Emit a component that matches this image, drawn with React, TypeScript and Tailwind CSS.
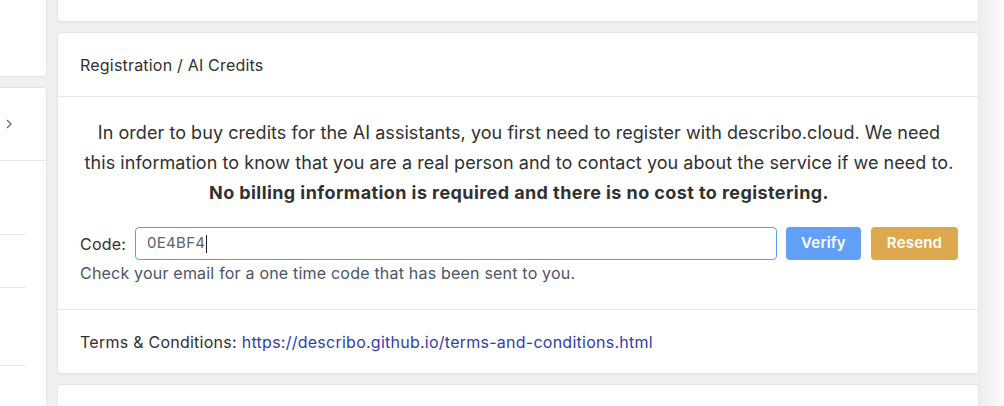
import React from "react";

export default function App() {
  const font = { fontFamily: "Inter, 'Noto Sans', sans-serif" };
  return (
    <div
      className="relative flex h-[406px] w-[1004px] overflow-hidden bg-[#f0f0f2] text-[#303133]"
      style={font}
    >
      {/* left column */}
      <div className="flex w-[47px] shrink-0 flex-col gap-[10px]">
        <div className="-mt-[10px] h-[87px] shrink-0 rounded-br-[4px] border-b border-r border-[#e4e4ec] bg-white" />
        <div className="flex flex-1 flex-col rounded-tr-[4px] border-r border-t border-[#e4e4ec] bg-white">
          <div className="flex h-[73px] shrink-0 items-center border-b border-[#e6e6f0] pl-[4px]">
            <svg width="10" height="12" viewBox="0 0 10 12" className="text-[#666]">
              <path d="M3 2 L7 6 L3 10" fill="none" stroke="currentColor" strokeWidth="1.2" />
            </svg>
          </div>
          <div className="h-[74px] w-[26px] shrink-0 border-b border-[#e6e6f0]" />
          <div className="h-[53px] w-[26px] shrink-0 border-b border-[#e6e6f0]" />
          <div className="h-[78px] w-[26px] shrink-0 border-b border-[#e6e6f0]" />
        </div>
      </div>

      {/* main column */}
      <div className="ml-[10px] flex w-[922px] shrink-0 flex-col gap-[10px]">
        <div className="-mt-[10px] h-[32px] shrink-0 rounded-b-[4px] border-x border-b border-[#e4e4ec] bg-white shadow-[0_1px_3px_rgba(0,0,0,0.04)]" />

        <div className="flex shrink-0 flex-col rounded-[4px] border border-[#e4e4ec] bg-white shadow-[0_1px_3px_rgba(0,0,0,0.04)]">
          <div className="flex h-[64px] items-center border-b border-[#e6e6f0] px-[22px] text-[16px] tracking-[0.2px]">
            Registration / AI Credits
          </div>
          <div className="flex flex-col pb-[24px] pl-[22px] pr-[20px] pt-[21px]">
            <div className="flex flex-col items-center whitespace-nowrap text-[18px] leading-[30px] text-[#303133]">
              <div className="tracking-[0.05px]">
                In order to buy credits for the AI assistants, you first need to register with
                describo.cloud. We need
              </div>
              <div className="tracking-[0.05px]">
                this information to know that you are a real person and to contact you about the
                service if we need to.
              </div>
              <div className="font-bold tracking-[0.42px]">
                No billing information is required and there is no cost to registering.
              </div>
            </div>
            <div className="mt-[19px] flex h-[33px] items-center">
              <span className="text-[16px] tracking-[0.2px]">Code:</span>
              <div className="ml-[9px] flex h-[33px] flex-1 items-center rounded-[4px] border border-[#5b9cf5] pl-[11px] text-[15px] tracking-[0.3px] text-[#606266]">
                <span>0E4BF4</span>
                <span className="ml-px inline-block h-[18px] w-px bg-[#222]" />
              </div>
              <button className="ml-[9px] h-[33px] w-[75px] rounded-[4px] bg-[#62a0f8] text-[15px] font-semibold tracking-[0.2px] text-white">
                Verify
              </button>
              <button className="ml-[10px] h-[33px] w-[87px] rounded-[4px] bg-[#dea84e] text-[15px] font-semibold tracking-[0.2px] text-white">
                Resend
              </button>
            </div>
            <div className="mt-px text-[16px] leading-[24px] tracking-[0.2px] text-[#4a5568]">
              Check your email for a one time code that has been sent to you.
            </div>
          </div>
          <div className="flex h-[64px] items-center border-t border-[#e6e6f0] px-[22px] text-[16px] tracking-[0.25px]">
            <span>Terms &amp; Conditions:</span>
            <a href="#" className="ml-[5px] text-[#2e40ac]">
              https://describo.github.io/terms-and-conditions.html
            </a>
          </div>
        </div>

        <div className="h-[40px] shrink-0 rounded-t-[4px] border-x border-t border-[#e4e4ec] bg-white" />
      </div>

      {/* right edge */}
      <div className="flex-1 bg-gradient-to-r from-[#ededf0] to-[#fcfcfd]" />
    </div>
  );
}
